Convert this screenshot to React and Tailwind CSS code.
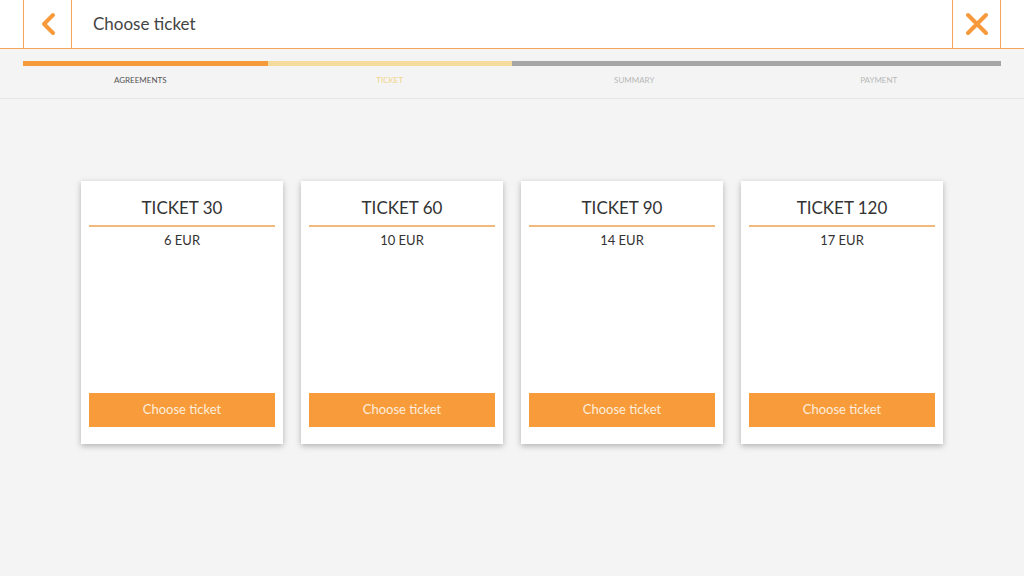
export default function App() {
  const steps = [
    { label: 'Agreements', bar: 'bg-[#f79a3b]', text: 'text-[#555] pr-[10px]' },
    { label: 'Ticket', bar: 'bg-[#f6dc9c]', text: 'text-[#f0d48a]' },
    { label: 'Summary', bar: 'bg-[#a6a6a6]', text: 'text-[#b8b8b8]' },
    { label: 'Payment', bar: 'bg-[#a6a6a6]', text: 'text-[#b8b8b8]' },
  ]
  const tickets = [
    { name: 'TICKET 30', price: '6 EUR' },
    { name: 'TICKET 60', price: '10 EUR' },
    { name: 'TICKET 90', price: '14 EUR' },
    { name: 'TICKET 120', price: '17 EUR' },
  ]

  return (
    <div className="w-[1024px] h-[576px] bg-[#f4f4f4] font-['Lato','Liberation_Sans',sans-serif] flex flex-col overflow-hidden">
      <header className="h-[49px] bg-white border-b-[1.5px] border-[#f6a45a] flex items-stretch px-[23px]">
        <button className="w-[49px] border-x-[1.5px] border-[#f6a45a] flex items-center justify-center">
          <svg width="18" height="24" viewBox="0 0 18 24">
            <path d="M14 3 L5 12 L14 21" fill="none" stroke="#f79a3b" strokeWidth="4" strokeLinecap="round" strokeLinejoin="round" />
          </svg>
        </button>
        <h1 className="ml-[21px] flex-1 flex items-center text-[17px] text-[#444]">Choose ticket</h1>
        <button className="w-[49px] border-x-[1.5px] border-[#f6a45a] flex items-center justify-center">
          <svg width="26" height="26" viewBox="0 0 26 26">
            <path d="M4 4 L22 22 M22 4 L4 22" fill="none" stroke="#f79a3b" strokeWidth="4" strokeLinecap="round" />
          </svg>
        </button>
      </header>

      <div className="h-[50px] border-b border-[#e6e6e6] px-[23px] pt-[12px] flex">
        {steps.map((s) => (
          <div key={s.label} className="flex-1 flex flex-col">
            <div className={`h-[5px] ${s.bar}`} />
            <div className={`mt-[8px] text-center text-[8px] uppercase ${s.text}`}>{s.label}</div>
          </div>
        ))}
      </div>

      <main className="flex-1 flex justify-center gap-[18px] pt-[82px]">
        {tickets.map((t) => (
          <div key={t.name} className="w-[202px] h-[263px] bg-white shadow-[0_2px_6px_rgba(0,0,0,0.28)] px-[8px] pt-[16px] pb-[17px] flex flex-col">
            <div className="text-center text-[17px] text-[#333] leading-[22px] pb-[6px] border-b-2 border-[#f2b97c]">{t.name}</div>
            <div className="text-center text-[13px] text-[#333] mt-[4px]">{t.price}</div>
            <button className="mt-auto h-[34px] bg-[#f89b3a] text-[#fdeedd] text-[13px]">Choose ticket</button>
          </div>
        ))}
      </main>
    </div>
  )
}
